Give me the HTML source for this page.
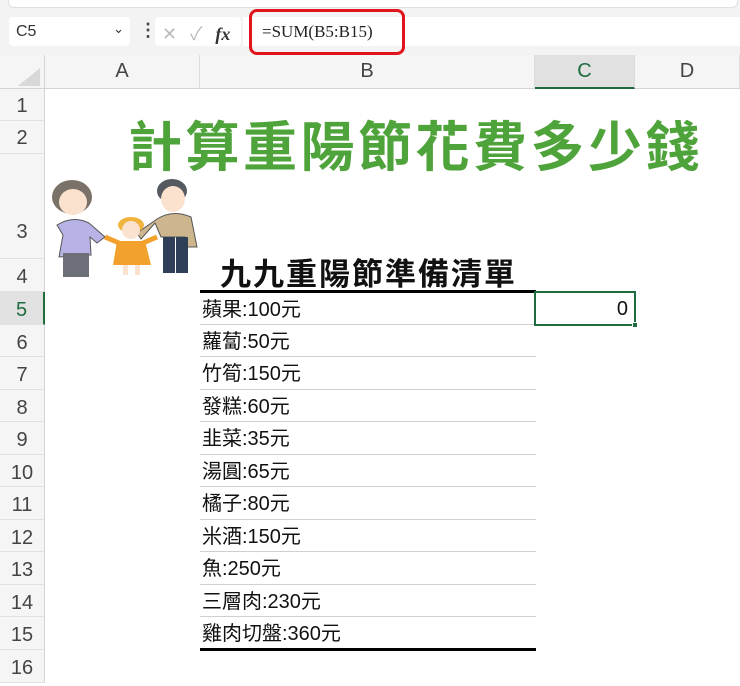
<!DOCTYPE html>
<html><head><meta charset="utf-8"><style>
*{margin:0;padding:0;box-sizing:border-box}
body{width:740px;height:676px;overflow:hidden;background:#fff;position:relative;font-family:"Liberation Sans","Noto Sans CJK TC",sans-serif}
.a{position:absolute}
.rh{position:absolute;left:0;width:45px;background:#f5f5f5;border-bottom:1px solid #e1e1e1;border-right:1px solid #d4d4d4;color:#444;font-size:20px;text-align:center}
.it{position:absolute;left:200px;width:336px;height:33px;border-bottom:1px solid #d0d0d0;font-size:20px;padding-left:2px;line-height:35px;color:#111}
.ch{position:absolute;top:55px;height:34px;background:#f5f5f5;border-right:1px solid #dcdcdc;border-bottom:1px solid #d4d4d4;font-size:20px;color:#444;text-align:center;line-height:32px}
</style></head><body>
<div class="a" style="left:0;top:0;width:740px;height:55px;background:#f3f3f3"></div>
<div class="a" style="left:8px;top:-6px;width:730px;height:14px;background:#fff;border-radius:6px;border:1px solid #e0e0e0"></div>
<div class="a" style="left:9px;top:17px;width:121px;height:29px;background:#fff;border-radius:4px;font-size:16px;color:#333;padding:6px 7px">C5<span style="position:absolute;right:6px;top:4px;font-size:13px">&#8964;</span></div>
<div class="a" style="left:139px;top:20px;font-size:18px;color:#444;font-weight:bold">&#8942;</div>
<div class="a" style="left:155px;top:17px;width:86px;height:29px;background:#fff;border-radius:4px;font-size:18px;color:#bbb;padding:3px 7px;letter-spacing:4px">✕ ✓ <i style="color:#333;font-family:'Liberation Serif',serif;font-weight:bold;font-size:18px;letter-spacing:0">fx</i></div>
<div class="a" style="left:243px;top:17px;width:497px;height:29px;background:#fff"></div>
<div class="a" style="left:249px;top:9px;width:156px;height:46px;border:3px solid #e0141b;border-radius:8px"></div>
<div class="a" style="left:262px;top:22px;font-family:'Liberation Serif',serif;font-size:17px;color:#222">=SUM(B5:B15)</div>

<div class="a" style="left:0;top:55px;width:45px;height:34px;background:#f5f5f5;border-right:1px solid #d4d4d4;border-bottom:1px solid #d4d4d4"></div>
<div class="a" style="left:18px;top:68px;width:0;height:0;border-left:22px solid transparent;border-bottom:18px solid #d8d8d8"></div>
<div class="ch" style="left:45px;width:155px">A</div>
<div class="ch" style="left:200px;width:335px">B</div>
<div class="ch" style="left:535px;width:100px;background:#e1e1e1;color:#1e6b3f;border-bottom:2px solid #1e6b3f">C</div>
<div class="ch" style="left:635px;width:105px">D</div>

<div class="rh" style="top:89px;height:32px;line-height:34px">1</div>
<div class="rh" style="top:121px;height:33px;line-height:34px">2</div>
<div class="rh" style="top:154px;height:105px;line-height:156px">3</div>
<div class="rh" style="top:259px;height:33px;line-height:36px">4</div>
<div class="rh" style="top:292px;height:33px;line-height:36px;background:#e1e1e1;color:#1e6b3f;border-right:2px solid #1e6b3f">5</div>
<div class="rh" style="top:325px;height:32px;line-height:36px">6</div>
<div class="rh" style="top:357px;height:33px;line-height:36px">7</div>
<div class="rh" style="top:390px;height:32px;line-height:36px">8</div>
<div class="rh" style="top:422px;height:33px;line-height:36px">9</div>
<div class="rh" style="top:455px;height:32px;line-height:36px">10</div>
<div class="rh" style="top:487px;height:33px;line-height:36px">11</div>
<div class="rh" style="top:520px;height:32px;line-height:36px">12</div>
<div class="rh" style="top:552px;height:33px;line-height:36px">13</div>
<div class="rh" style="top:585px;height:32px;line-height:36px">14</div>
<div class="rh" style="top:617px;height:33px;line-height:36px">15</div>
<div class="rh" style="top:650px;height:33px;line-height:36px">16</div>

<div class="a" style="left:128px;top:116px;font-size:54px;font-weight:bold;color:#4ea33a;letter-spacing:3.5px;white-space:nowrap;line-height:64px">計算重陽節花費多少錢</div>
<div class="a" style="left:220px;top:249px;font-size:31px;font-weight:bold;color:#111;white-space:nowrap;letter-spacing:2px">九九重陽節準備清單</div>

<svg class="a" style="left:45px;top:175px" width="180" height="110" viewBox="0 0 180 110">
<ellipse cx="27" cy="22" rx="20" ry="17" fill="#7a7168"/><ellipse cx="28" cy="27" rx="14" ry="13" fill="#fbe2cf"/>
<path d="M12 50 Q28 40 44 48 L60 62 L52 68 L45 62 L46 80 L14 82 L18 60 Z" fill="#b7b3e6" stroke="#555" stroke-width="1"/>
<rect x="18" y="78" width="26" height="24" fill="#6d7079"/>
<ellipse cx="127" cy="16" rx="15" ry="12" fill="#555a60"/><ellipse cx="128" cy="24" rx="12" ry="13" fill="#fbe2cf"/>
<path d="M112 44 Q128 34 146 42 L152 72 L142 72 L140 62 L116 62 L110 48 L96 64 L92 58 Z" fill="#cdb68d" stroke="#555" stroke-width="1"/>
<rect x="118" y="62" width="12" height="36" fill="#2f3f58"/><rect x="131" y="62" width="12" height="36" fill="#2f3f58"/>
<ellipse cx="86" cy="50" rx="13" ry="8" fill="#f0b33e"/><ellipse cx="86" cy="55" rx="9" ry="9" fill="#fbe2cf"/>
<path d="M72 66 L100 66 L106 90 L68 90 Z" fill="#f2a12c"/><path d="M60 62 L74 68 M98 68 L112 62" stroke="#f2a12c" stroke-width="5"/>
<rect x="78" y="90" width="5" height="10" fill="#fbe2cf"/><rect x="90" y="90" width="5" height="10" fill="#fbe2cf"/>
</svg>

<div class="a" style="left:200px;top:290px;width:336px;height:3px;background:#000"></div>
<div class="it" style="top:293px;height:32px">蘋果:100元</div>
<div class="it" style="top:325px;height:32px">蘿蔔:50元</div>
<div class="it" style="top:357px;height:33px">竹筍:150元</div>
<div class="it" style="top:390px;height:32px">發糕:60元</div>
<div class="it" style="top:422px;height:33px">韭菜:35元</div>
<div class="it" style="top:455px;height:32px">湯圓:65元</div>
<div class="it" style="top:487px;height:33px">橘子:80元</div>
<div class="it" style="top:520px;height:32px">米酒:150元</div>
<div class="it" style="top:552px;height:33px">魚:250元</div>
<div class="it" style="top:585px;height:32px">三層肉:230元</div>
<div class="it" style="top:617px;height:31px;border-bottom:none">雞肉切盤:360元</div>
<div class="a" style="left:200px;top:648px;width:336px;height:3px;background:#000"></div>

<div class="a" style="left:534px;top:291px;width:102px;height:35px;border:2px solid #1e6b3f;font-size:20px;text-align:right;padding-right:6px;line-height:33px;color:#111">0</div>
<div class="a" style="left:632px;top:322px;width:6px;height:6px;background:#1e6b3f;border:1px solid #fff"></div>
</body></html>
